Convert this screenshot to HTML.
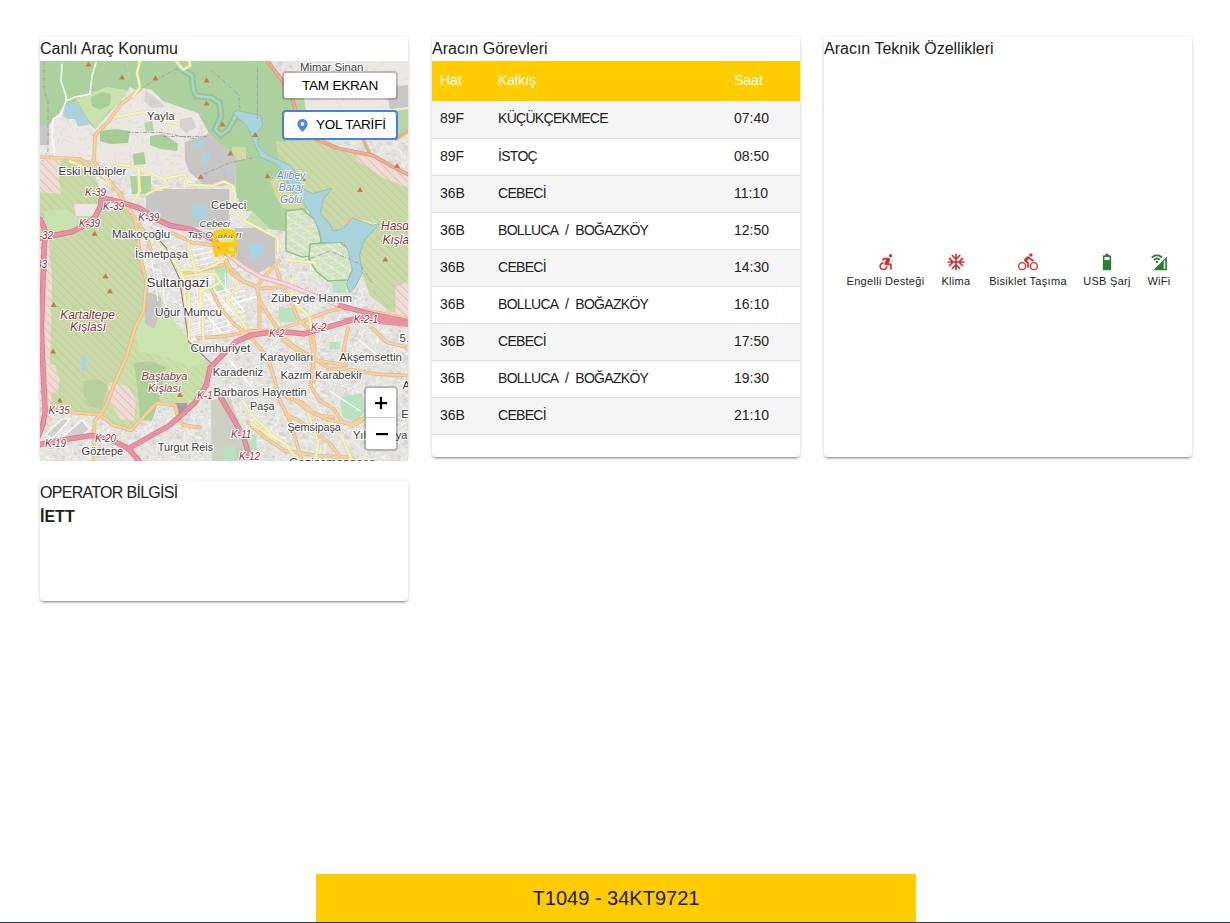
<!DOCTYPE html>
<html><head><meta charset="utf-8">
<style>
*{box-sizing:border-box;margin:0;padding:0}
html,body{width:1230px;height:923px;overflow:hidden;background:#fff;font-family:"Liberation Sans",sans-serif;color:#212121}
.card{position:absolute;background:#fff;border-radius:4px;box-shadow:0 3px 1px -2px rgba(0,0,0,.2),0 2px 2px 0 rgba(0,0,0,.14),0 1px 5px 0 rgba(0,0,0,.12);overflow:hidden}
.ttl{position:absolute;left:0;top:0;font-size:16px;line-height:24px;color:#212121;white-space:nowrap}
#c1{left:40px;top:37px;width:368px;height:420px;overflow:visible}
#c2{left:432px;top:37px;width:368px;height:420px}
#c3{left:824px;top:37px;width:368px;height:420px}
#c4{left:40px;top:481px;width:368px;height:120px}
#map{position:absolute;left:0;top:24px;width:368px;height:400px;overflow:hidden;background:#e3e0dc}
table{position:absolute;left:0;top:24px;width:368px;border-collapse:collapse;font-size:14px}
th{height:40px;background:#ffcc00;color:#fff;font-weight:normal;text-align:left;padding:0 0 2px 8px}
td{height:37px;padding:0 0 2px 8px;border-bottom:1px solid #e0e0e0;color:#212121}
td.k{letter-spacing:-0.7px;word-spacing:4px}
tr.g td{background:#f5f5f5}
.fi{position:absolute;top:215px;width:20px;height:20px}
.fl{position:absolute;top:238px;font-size:11px;line-height:13px;color:#212121;white-space:nowrap;text-align:center;width:120px;letter-spacing:0.3px}
#bar{position:absolute;left:316px;top:874px;width:600px;height:49px;background:#ffcc00;font-size:20px;text-align:center;line-height:48px;color:#1a1a1a}
#line{position:absolute;left:0;top:922px;width:1230px;height:1px;background:rgba(4,7,34,.83)}
.mb{position:absolute;background:#fff;background-clip:padding-box;border:2px solid rgba(0,0,0,.2);border-radius:4px;font-size:13.5px;letter-spacing:-0.2px;color:#000;white-space:nowrap}
</style></head><body>
<div class="card" id="c1"><div class="ttl">Canlı Araç Konumu</div><div id="map"><svg width="368" height="400" viewBox="0 0 368 400" style="position:absolute;left:0;top:0;font-family:'Liberation Sans',sans-serif">
<defs>
<pattern id="urb" width="42" height="42" patternUnits="userSpaceOnUse"><rect width="42" height="42" fill="#e4e2df"/><path fill="#d7d4d1" d="M38.1 3.7h3.9v2.9h-2.3zM19.0 26.3h3.8v2.3h-3.1zM36.9 33.5h3.9v2.4h-3.3zM8.6 30.3h3.6v2.8h-3.4zM9.0 37.8h4.0v3.5h-3.1zM33.2 13.5h3.8v3.2h-2.7zM3.5 18.5h3.1v3.0h-3.0zM1.2 34.0h2.1v3.1h-2.3zM14.1 33.1h2.3v1.8h-3.0zM30.4 35.3h3.4v3.4h-3.0zM39.9 3.6h2.4v2.6h-2.6zM30.6 26.8h3.0v3.2h-3.1zM13.1 16.0h3.7v3.3h-2.4zM35.7 40.7h3.0v2.6h-2.4zM22.5 21.1h3.2v1.6h-3.9zM21.7 16.8h3.6v2.6h-3.0zM29.0 2.8h3.1v2.3h-3.9zM38.8 11.3h2.9v1.8h-2.9zM34.3 37.8h3.0v2.1h-2.4zM26.0 38.9h2.3v3.1h-2.0zM8.2 9.5h3.4v2.1h-2.7zM26.0 4.4h3.5v1.7h-3.0zM10.5 8.3h3.1v2.4h-2.8zM17.4 22.2h2.3v1.9h-3.3zM26.8 22.2h3.7v2.7h-3.7zM9.8 31.1h3.6v3.3h-2.6zM13.2 38.8h2.4v3.5h-3.8zM5.6 10.1h3.5v2.0h-2.2zM35.0 17.7h3.6v1.8h-2.8zM28.8 0.7h2.4v2.9h-3.8zM40.7 4.8h3.0v3.0h-3.0zM28.8 7.9h2.1v1.7h-2.1zM23.2 21.6h3.1v1.8h-2.4zM8.6 35.3h4.0v3.4h-2.2zM2.6 40.0h2.9v3.0h-2.7zM19.6 21.6h2.9v2.7h-2.0zM29.4 35.5h2.4v2.4h-3.5zM17.0 8.2h2.3v2.5h-2.0zM37.5 33.7h3.4v3.2h-3.3zM17.0 25.2h3.0v3.5h-3.6z"/><path fill="none" stroke="#f5f4f2" stroke-width="0.9" d="M19.0 23.5l-6.1 1.5M21.3 24.7l5.5 3.6M26.5 33.3l5.3 1.6M3.8 34.0l-2.4 3.5M41.3 40.5l-3.3 6.3M6.6 0.6l-0.4 4.3M8.0 10.2l6.3 0.6M18.5 35.4l-0.4 7.2M21.0 27.8l0.7 5.3M41.9 41.8l-6.6 3.6M13.2 9.6l2.7 3.4M32.2 16.8l-5.3 2.7M40.2 35.6l5.0 0.0M38.2 19.7l-6.0 0.4M3.1 26.4l-4.1 3.4M3.7 14.0l-7.7 0.9M5.0 10.3l4.1 1.3M33.5 7.5l-1.2 6.1M8.0 30.7l6.6 2.9M4.9 17.7l4.2 3.3M40.8 33.7l4.9 6.9M8.8 16.6l-6.5 3.2M4.2 41.6l4.1 3.3M32.5 13.8l2.6 3.5M3.8 24.5l5.1 4.8M15.6 19.0l-6.4 0.8M24.1 36.4l4.0 2.6M38.2 34.3l3.5 3.5M31.1 39.5l7.1 5.1M37.1 25.3l1.1 4.4M1.6 40.4l5.5 5.1M10.8 34.6l-1.6 5.2M7.4 30.3l5.0 1.1M23.5 35.8l-1.9 5.1M38.5 8.6l5.3 0.3M18.7 2.5l5.0 3.1M24.0 5.5l3.5 7.7M41.2 27.6l-3.9 5.7M5.9 1.5l8.5 0.5M29.4 40.4l7.2 0.5M20.3 30.7l4.8 7.6M3.2 22.9l-5.8 6.3M31.0 29.6l-6.8 5.2M14.8 28.8l-8.0 2.6M17.5 33.2l-6.2 2.9M26.2 16.1l-1.8 6.8M3.4 26.9l-8.4 0.2M30.6 16.3l-4.6 5.1M18.5 35.2l7.5 2.0M1.3 25.3l0.3 5.1M29.3 20.9l-3.0 8.1M10.7 0.5l4.3 6.0M8.5 7.1l-7.0 2.1M18.6 37.5l3.8 6.3M8.3 18.1l-7.0 4.9M37.0 16.1l-1.4 5.4M5.7 20.9l-7.2 4.0M29.9 39.9l3.1 3.7M18.9 11.6l4.7 3.8M26.3 20.7l4.5 6.9M41.2 19.0l4.0 1.0M36.7 1.7l-4.2 5.4M13.0 33.2l4.7 0.3M19.1 1.0l-4.5 2.6M5.9 2.0l-2.5 5.7M26.5 27.5l-7.2 5.0M28.7 8.4l0.4 4.9M0.5 19.8l-3.1 3.8M11.4 14.5l-3.8 5.4M25.8 31.8l2.6 7.5"/></pattern>
<pattern id="res" width="42" height="42" patternUnits="userSpaceOnUse"><rect width="42" height="42" fill="#ebe8e4"/><path fill="none" stroke="#d9d4cf" stroke-width="0.6" d="M19.0 23.5l-6.1 1.5M21.3 24.7l5.5 3.6M26.5 33.3l5.3 1.6M3.8 34.0l-2.4 3.5M41.3 40.5l-3.3 6.3M6.6 0.6l-0.4 4.3M8.0 10.2l6.3 0.6M18.5 35.4l-0.4 7.2M21.0 27.8l0.7 5.3M41.9 41.8l-6.6 3.6M13.2 9.6l2.7 3.4M32.2 16.8l-5.3 2.7M40.2 35.6l5.0 0.0M38.2 19.7l-6.0 0.4M3.1 26.4l-4.1 3.4M3.7 14.0l-7.7 0.9M5.0 10.3l4.1 1.3M33.5 7.5l-1.2 6.1M8.0 30.7l6.6 2.9M4.9 17.7l4.2 3.3M40.8 33.7l4.9 6.9M8.8 16.6l-6.5 3.2M4.2 41.6l4.1 3.3M32.5 13.8l2.6 3.5M3.8 24.5l5.1 4.8M15.6 19.0l-6.4 0.8M24.1 36.4l4.0 2.6M38.2 34.3l3.5 3.5M31.1 39.5l7.1 5.1M37.1 25.3l1.1 4.4M1.6 40.4l5.5 5.1M10.8 34.6l-1.6 5.2M7.4 30.3l5.0 1.1M23.5 35.8l-1.9 5.1M38.5 8.6l5.3 0.3"/></pattern>
<pattern id="hat" width="6" height="6" patternUnits="userSpaceOnUse" patternTransform="rotate(-45)"><rect width="6" height="6" fill="#c9d9a8"/><rect width="0.7" height="6" fill="#bacb9c"/></pattern>
<pattern id="hatg" width="6" height="6" patternUnits="userSpaceOnUse" patternTransform="rotate(-45)"><rect width="6" height="6" fill="#cbdfab"/><rect width="0.7" height="6" fill="#bdcf9f"/></pattern>
<pattern id="hatp" width="6" height="6" patternUnits="userSpaceOnUse" patternTransform="rotate(-45)"><rect width="6" height="6" fill="#efdcd5"/><rect width="0.8" height="6" fill="#dbbab2"/></pattern>
<pattern id="frw" width="8" height="8" patternUnits="userSpaceOnUse" patternTransform="rotate(35)"><rect width="8" height="8" fill="#d0e1c1"/><path d="M0 2Q4 0 8 3M1 8Q3 5 7 0" stroke="#f1f4ea" stroke-width="0.8" fill="none"/></pattern>
</defs>
<rect width="368" height="400" fill="url(#urb)"/>
<!-- light residential -->
<path fill="url(#res)" d="M0 56L58 64 55 100 0 98Z"/>
<path fill="url(#res)" d="M55 64L70 51 81 41 95 29 103 27 112 29 123 40 158 52 160 70 150 80 148 100 158 116 123 116 95 110 55 100Z"/>
<path fill="url(#res)" d="M246 0H368V80H290L262 52 262 12Z"/>
<path fill="url(#res)" d="M189 128L204 128 206 165 195 167 189 162Z"/>
<!-- forests -->
<path fill="#add19e" d="M0 0H87L90 26 81 38 70 51 58 64 55 68 48 61 36 41 26 44 13 58 9 64H0Z"/>
<path fill="#add19e" d="M87 0H228L242 19 252 36 256 51 270 75 256 78 237 80 246 93 256 110 264 134 268 159 246 170 230 168 212 150 204 150 196 134 195 95 178 81 169 72 158 52 140 46 123 40 112 29 103 27 95 29 90 26Z"/>
<path fill="#a6cc95" d="M60 70L75 68 90 70 88 82 70 83 60 80Z"/>
<path fill="#a9cf98" d="M110 75L124 73 138 83 137 90 120 88 110 84Z"/>
<path fill="#a9cf98" d="M93 93L104 91 106 103 94 104Z"/>
<path fill="#b5d5a4" d="M104 62L112 60 114 70 106 71Z"/>
<path fill="#add19e" d="M90 115L111 115 111 133 92 133Z"/>
<path fill="#add19e" d="M196 95L224 105 250 112 264 146 246 170 230 168 212 150 204 150 200 134Z"/>
<path fill="#c5dfae" d="M212 150L230 168 222 168 206 160Z"/>
<path fill="#b3d4a3" d="M254 38L264 36 266 50 258 54Z"/>
<path fill="#b8d6a8" d="M355 50L368 48 368 70 356 78 350 60Z"/>
<path fill="#add19e" d="M237 78L275 78 290 88 275 93 246 96Z"/>
<path fill="#c9c6c6" d="M345 26L368 24 368 46 350 48Z"/>
<path fill="#c8e3ae" d="M36 38L67 26 87 29 81 41 68 51 55 67 46 55Z"/>
<path fill="#d3dca0" d="M192 86L206 86 206 99 193 99Z"/>
<path fill="#a9cf98" d="M51 36L62 31 71 33 70 44 60 49 52 45Z"/>
<path fill="#d6d2cf" d="M106 30L122 42 124 46 112 47 104 40Z M140 58L152 56 156 66 146 72 140 66Z"/>
<path fill="#d2daa0" d="M230 120L240 116 249 126 254 145 243 147 236 136Z"/>
<!-- lake -->
<path fill="#aad3df" d="M24.7 43.6L34.9 40.7 43.6 50.8 49.4 63.9 37.8 65.3 34.9 58 27.6 58 23.2 55.2Z"/>
<path fill="#c9c6c6" d="M0 64H9V84H0Z"/>
<!-- quarries -->
<path fill="#c8c5c5" d="M144.8 81.3L169.5 72.6 178.2 81.3 195.6 94.4 195.6 123.4 178.2 124.9 163.7 123.4 149 110.4 144.8 98.8Z"/>
<ellipse cx="159" cy="83" rx="6" ry="4.5" fill="#aad3df"/>
<ellipse cx="166" cy="96" rx="4" ry="6" fill="#aad3df"/>
<ellipse cx="189" cy="110" rx="3.5" ry="3" fill="#aad3df"/>
<path fill="#c8c5c5" d="M123 128L189.3 128 189.3 162.8 173.4 168.6 151.8 165.7 123 161.4Z"/>
<path fill="#aad3df" d="M152 145L166 143 170 152 162 160 152 158Z"/>
<path fill="#c8c5c5" d="M195 167L223.8 167 235.3 177.2 235.3 203 218 211.8 197.9 201.7 195 188.7Z"/>
<path fill="#aad3df" d="M208 184L222 181 224 194 212 199Z"/>
<path fill="#c8c5c5" d="M106 130L130 130 130 162 116 158 106 150Z"/>
<!-- military right -->
<path fill="url(#hat)" d="M236 81L270 79 296.8 87 333 94.4 350.6 104.6 368 113.3V256L350 250 330 235 322 212 319 195 324 180 340 163 312 157 303 167 293 170 289 163 281 153 281 134 264 134 256 110 238 98Z"/>
<path fill="url(#hatp)" d="M315 95L333 94.4 350.6 104.6 368 113.3V126L345 118 318 100Z"/>
<path fill="url(#hatp)" d="M355.5 226L368 220V267H355.5Z"/>
<path fill="#e5c98f" d="M303.6 157L318 157 323 170 321 177 316 176 313 181 306 172Z"/>
<path fill="#d2d6a0" d="M246 134L265 134 266 146 256 149 246 148Z"/>
<path fill="url(#frw)" stroke="#8fc47f" stroke-width="1.5" d="M246 150L262 148 276 160 281 178 279 194 262 196 246 190Z"/>
<path fill="url(#frw)" stroke="#8fc47f" stroke-width="1.5" d="M270 183L300 181 310 190 313 208 308 219 288 220 276 210 269 198Z"/>
<!-- water -->
<path fill="none" stroke="#98c888" stroke-width="7" d="M137.5 5.8L152 14.5 153.5 29 156.4 34.9 171 36.3 179.6 42 181 55.2 175.3 68.3 181 74 188.4 68.3 195.6 55.2 204.3 58"/>
<path fill="none" stroke="#93c4a2" stroke-width="3.2" d="M137.5 5.8L152 14.5 153.5 29 156.4 34.9 171 36.3 179.6 42 181 55.2 175.3 68.3 181 74 188.4 68.3 195.6 55.2 204.3 58"/>
<path fill="none" stroke="#aad3df" stroke-width="2.2" d="M137.5 5.8L152 14.5 153.5 29 156.4 34.9 171 36.3 179.6 42 181 55.2 175.3 68.3 181 74 188.4 68.3 195.6 55.2 204.3 58"/>
<path fill="#aad3df" stroke="#93c4a2" stroke-width="1" d="M197 49.4L220.4 54.6 223 65 216.5 71.5 219.1 85.8 226.9 93.6 238.6 98.8 251.6 105.3 256.8 114.4 262 127.4 272.4 132.6 291.9 127.4 282.8 139.1 280.6 152.7 289.2 162.8 293.5 170 303.6 167.1 312.3 157 332.4 164.2 339.6 162.8 323.8 180 319.5 194.5 322.3 211.8 315.1 226.2 309.4 232 306.5 223.3 312.3 208.9 307.9 188.7 303.6 181.5 282 181.5 279.1 168.6 271.9 154.2 268.5 150 259.4 135.2 249 124.8 245.1 111.8 236 102.7 220.4 96.2 213.9 81.9 207.4 65 197 55.9 192.7 52Z"/>
<!-- military left top -->
<path fill="url(#hatp)" d="M0 99L21 99 19 120 21 133 0 131Z"/>
<path fill="url(#hat)" d="M21 99L50 99 60 130 61 137 55 156 44 164.5 31.7 170.9 15.9 174 0 177V131L21 133 19 120Z"/>
<path fill="#c8e2b0" d="M5 150L25 148 40 158 42 166 31 171 15 174 5 170Z"/>
<path fill="#ebe8e4" d="M34 143L59 143 57 155 36 155Z"/>
<!-- Kartaltepe -->
<path fill="url(#hat)" d="M0 177L15.9 174 31.7 170.9 44.4 164.5 55 156.1 60.3 145.5 70 150 84.6 143.4 95.1 157.1 100.8 198.8 106.6 220.4 103.7 249.2 95 267 86.4 295.8 74.9 321.7 66.3 344.8 59.8 353.6 26 351 0 348.4Z"/>
<path fill="url(#hatp)" d="M0 180L9 178 12 220 10 300 12 360 8 372 0 372Z"/>
<path fill="#b9cf9c" d="M43 320L58 318 67.6 324 62 348 50 345 44 335Z"/>
<path fill="#aad3df" d="M41 295L46 294 47 309 42 310Z"/>
<path fill="url(#hatp)" d="M2.6 303L15 304 19.5 318 18 331.5 2.6 331.5Z"/>
<!-- Bastabya -->
<path fill="#cbe5ae" d="M95 267L103.7 249 106.6 235 116.3 227.7 132.5 256.9 148.8 279.7 169.3 305.7 166 320 150 306 128 296 100 290Z"/>
<path fill="#c8c5c5" d="M105 230L121 236 121 250 114 268 105 262Z"/>
<path fill="url(#hatg)" d="M95 267L100 290 128 296 150 306 170 300 170.5 307.3 166.2 324.6 154.7 341.9 137.4 356 135.3 344.5 117 342 110.6 348.4 91 369.2 72.8 364 59.8 353.6 66.3 344.8 74.9 321.7 86.4 295.8Z"/>
<path fill="#b0cf9d" d="M94 302L110 300 126 306 122 330 112 360 100 358 98 330Z"/>
<path fill="url(#hatp)" d="M67.6 321L88 325 96 340 94 360 80 358 70 340Z"/>
<!-- misc -->
<path fill="#cdd1c5" d="M170.5 339L190 336 203.7 376 209 400H172Z"/>
<path fill="#9f9f9f" d="M135.3 342L147 342 147 353.6 135.3 353.6Z"/>
<path fill="#b9e3c0" d="M183.5 385H195V400H183.5Z M206.5 373.6H216.6V389.4H206.5Z M175 206.5H187V231H175Z M239 247H256V261H239Z M293 220H306V232H293Z M300 336L322 332 326 350 316 361 302 356Z M290 281L300 281 300 288 290 288Z"/>
<path fill="none" stroke="#a39fb0" stroke-width="1" stroke-dasharray="4 1.5 1 1.5" d="M171 8.7L198.5 33.4 200 48M217.4 7.3L217.4 58M123 75.5L166.6 75.5 169.5 71M163.7 113L189.8 101.7 217.4 95.8M4 0L4 30 8 40 8 90 2 100M99.7 28L138.7 6.5M86.7 71.5L121 71.5 156 78M263 200L290 190 320 203 332 222"/>
<path fill="none" stroke="#fbfaf8" stroke-width="1.1" d="M150 238.0L205 224.0M150 243.2L205 229.2M150 248.4L205 234.4M150 253.6L205 239.6M150 258.8L205 244.8M150 264.0L205 250.0M150 269.2L205 255.2M150 274.4L205 260.4M150 279.6L205 265.6M156 212L160 272M170 212L174 272M185 212L189 272"/>
<path fill="none" stroke="#8d817b" stroke-width="1.1" d="M120.2 179.9L126.5 187.3 130.7 198.9 139.2 216.9 143.4 244 148.7 280.7 175.8 306.7"/>
<path fill="none" stroke="#fbfaf8" stroke-width="1.1" d="M151.9 189.4L170.9 185.1M152.9 194.7L172 190.4M154 200L173 195.7M155.1 205.3L174 201M112 200L118 240M120 205L126 250"/>
<path fill="#d3d0cd" stroke="#fff" stroke-width="1.2" d="M5 374L22 358 30 358 13 377Z M22 377L42 359 50 368 38 378Z"/>
<!-- white roads -->
<g fill="none" stroke="#fff" stroke-width="1.4" stroke-linecap="round" stroke-linejoin="round">
<path d="M22 3L21 20 26 35 26 40 35 36 50 33 52 15 56 2"/>
<path d="M26 40L20 55 13 58 12 75 15 95"/>
<path d="M165 232L190 262M172 226L197 256M180 221L204 250M156 240L180 270M190 300L215 330M250 300L270 320M290 330L320 350M200 240L220 235M280 350L300 370M320 280L345 300"/>
</g>
<!-- orange roads -->
<g fill="none" stroke-linecap="round" stroke-linejoin="round">
<g stroke="#e2b47f" stroke-width="3.6">
<path d="M101 28L81 43 68 61 55 74 54 101 61 110 81 134"/>
<path d="M0 96L40 98 56 110 70 122 81 134 86 145 95.1 157.1 100.8 198.8 106.6 220.4 103.7 249.2 95 267 86.4 295.8 74.9 321.7 66.3 344.8 59.8 353.6 54.6 360 53.3 400"/>
<path d="M53 99L65.5 115.9 78.2 130.7 84.6 143.4 95.1 157.1 105.7 173 111 189"/>
<path d="M0 348.4L26 351 59.8 353.6 72.8 364 91 369.2 110.6 348.4 117 342 135.3 344.5 137.9 355 143 364 160 366.6"/>
<path d="M131.6 171.4L151.8 181.5 173.4 184.4 185 194.5 189.3 206 203.7 220.4 221 227.6 246 226"/>
<path d="M185.6 200L188.2 210.4 201.2 219.5 216.8 226 219.4 239 219.4 267.6M216.8 226L224.6 215.6 235 203.9 239 200"/>
<path d="M235 203.9L242.9 226 252 243 258.5 258.5 268.9 267.6 272.8 291 274 320"/>
<path d="M219.4 239L227.3 252 237.7 267.6 240.3 275.4 248 283.2 255.9 288.5 261 293.7 274 298.9 304 304"/>
<path d="M158 277L183 275.4 209 270.2 237.7 269 261 261.1 287 250.7 304 246.8 340 252 368 258"/>
<path d="M170 226L180.4 246.8 193.4 262.4 206.4 272.8 216.8 283.2 228.6 298.9 235 320 240 340 250 360 262 400"/>
<path d="M144 213L183 203.9M246 278.5L254.6 285.7 270.5 295.8 289.2 307.3 310.8 308.8 335.3 313.1 368 314.5"/>
<path d="M271.9 267L274.8 288.6 271.9 310.2 270.5 324.6 279.1 339 293.5 347.7 302.2 360.6 312.3 364.9 320.9 360.6 326.7 353.4 338.2 364.9 346.8 376.5 368 376.5"/>
<path d="M308 267L303.6 288.6 306.5 304.4M246 336L263.3 341.9 274.8 353.4 293.5 356.3M246 353.4L260.4 360.6 274.8 370.7 289.2 382.2 303.6 400M332.4 267L346.8 281.4 365.5 285.7"/>
<path d="M207.4 361L224.3 376.2 244.6 389.8 278.4 394.8 312.3 396.5M254.8 339L268.3 349.2 288.6 359.3 312.3 362.7 325.8 356MM-1 390L29 381 52.5 377.8MM171 216.9L175.1 229.5 180.4 244M209.4 278.5L215.2 295.8 223.8 310.2 238.2 316 246 321.7M131.6 353.4L137.4 367.8 157.6 377.9 170.5 400M209.4 353.4L223.8 359.2 246 367.8M203.7 376.5L223.8 390.9 246 396.6"/>
<path d="M356 78L368 70M323 78L330 93"/>
</g>
<g stroke="#f6d09f" stroke-width="2.4">
<path d="M101 28L81 43 68 61 55 74 54 101 61 110 81 134"/><path d="M0 96L40 98 56 110 70 122 81 134 86 145 95.1 157.1 100.8 198.8 106.6 220.4 103.7 249.2 95 267 86.4 295.8 74.9 321.7 66.3 344.8 59.8 353.6 54.6 360 53.3 400"/><path d="M53 99L65.5 115.9 78.2 130.7 84.6 143.4 95.1 157.1 105.7 173 111 189"/><path d="M0 348.4L26 351 59.8 353.6 72.8 364 91 369.2 110.6 348.4 117 342 135.3 344.5 137.9 355 143 364 160 366.6"/><path d="M131.6 171.4L151.8 181.5 173.4 184.4 185 194.5 189.3 206 203.7 220.4 221 227.6 246 226"/><path d="M185.6 200L188.2 210.4 201.2 219.5 216.8 226 219.4 239 219.4 267.6M216.8 226L224.6 215.6 235 203.9 239 200"/><path d="M235 203.9L242.9 226 252 243 258.5 258.5 268.9 267.6 272.8 291 274 320"/><path d="M219.4 239L227.3 252 237.7 267.6 240.3 275.4 248 283.2 255.9 288.5 261 293.7 274 298.9 304 304"/><path d="M158 277L183 275.4 209 270.2 237.7 269 261 261.1 287 250.7 304 246.8 340 252 368 258"/><path d="M170 226L180.4 246.8 193.4 262.4 206.4 272.8 216.8 283.2 228.6 298.9 235 320 240 340 250 360 262 400"/><path d="M144 213L183 203.9M246 278.5L254.6 285.7 270.5 295.8 289.2 307.3 310.8 308.8 335.3 313.1 368 314.5"/><path d="M271.9 267L274.8 288.6 271.9 310.2 270.5 324.6 279.1 339 293.5 347.7 302.2 360.6 312.3 364.9 320.9 360.6 326.7 353.4 338.2 364.9 346.8 376.5 368 376.5"/><path d="M308 267L303.6 288.6 306.5 304.4M246 336L263.3 341.9 274.8 353.4 293.5 356.3M246 353.4L260.4 360.6 274.8 370.7 289.2 382.2 303.6 400M332.4 267L346.8 281.4 365.5 285.7"/><path d="M207.4 361L224.3 376.2 244.6 389.8 278.4 394.8 312.3 396.5M254.8 339L268.3 349.2 288.6 359.3 312.3 362.7 325.8 356MM-1 390L29 381 52.5 377.8MM171 216.9L175.1 229.5 180.4 244M209.4 278.5L215.2 295.8 223.8 310.2 238.2 316 246 321.7M131.6 353.4L137.4 367.8 157.6 377.9 170.5 400M209.4 353.4L223.8 359.2 246 367.8M203.7 376.5L223.8 390.9 246 396.6"/>
</g>
</g>
<!-- yellow roads -->
<g fill="none" stroke-linecap="round" stroke-linejoin="round">
<g stroke="#dcdc9a" stroke-width="3">
<path d="M100 0L97 12 100 26 93 36M75 56L103 51 112 54 125 59.6 138 63M99 107L99 134M136 0L143.3 8.7 150.6 4.4 149 0"/>
<path d="M30 100L65 116 70 125M77 103L100 107 123 118 144.8 113.3 147.7 123.4 172.4 124.9 184 120.5 192.7 124.9 195.6 134 192 148.4 205 160 238 177.2 238 191.6M98 108L100 130 93 141M106 134L116 128 130 125"/>
<path d="M117 182L129.7 193.6 139.2 208.4 143.4 216.9 145.5 244M147.7 182L154 204.2 156.1 212.6M141.3 215.8L159.3 213.7 175.1 212.6 180.4 221 173 225.3 160.3 229.5 160.3 244M139.2 208.4L160 209.5 175 204 186 196M198.6 223.4L186.9 239 206.4 267.6M161 226L163.5 280.7M149.2 231.2L149.2 278M253 217L250.7 239 268.9 254.6 271.5 267.6M246 198.8L274.8 201.7M250.3 217.5L254.6 240"/>
<path d="M202.3 339L210.8 352.5 231 372.8 249.7 386.4M210.8 362.7L244.6 383 254.8 394.8M268 352.5L278.4 381.3 275 400M300.4 372.8L312.3 400MM31.6 381.5L32 400M0 400L30 392MM101.5 364L106 400M110.6 348.4L135 364 160 362M320.9 281.4L326.7 292.9 332.4 307.3M246 290L254.6 304.4 274.8 305.9M140 360L160 380 170 400M230 340L250 380M290 370L310 400M330 300L360 330"/>
</g>
<g stroke="#f5f5b8" stroke-width="2">
<path d="M100 0L97 12 100 26 93 36M75 56L103 51 112 54 125 59.6 138 63M99 107L99 134M136 0L143.3 8.7 150.6 4.4 149 0"/><path d="M30 100L65 116 70 125M77 103L100 107 123 118 144.8 113.3 147.7 123.4 172.4 124.9 184 120.5 192.7 124.9 195.6 134 192 148.4 205 160 238 177.2 238 191.6M98 108L100 130 93 141M106 134L116 128 130 125"/><path d="M117 182L129.7 193.6 139.2 208.4 143.4 216.9 145.5 244M147.7 182L154 204.2 156.1 212.6M141.3 215.8L159.3 213.7 175.1 212.6 180.4 221 173 225.3 160.3 229.5 160.3 244M139.2 208.4L160 209.5 175 204 186 196M198.6 223.4L186.9 239 206.4 267.6M161 226L163.5 280.7M149.2 231.2L149.2 278M253 217L250.7 239 268.9 254.6 271.5 267.6M246 198.8L274.8 201.7M250.3 217.5L254.6 240"/><path d="M202.3 339L210.8 352.5 231 372.8 249.7 386.4M210.8 362.7L244.6 383 254.8 394.8M268 352.5L278.4 381.3 275 400M300.4 372.8L312.3 400MM31.6 381.5L32 400M0 400L30 392MM101.5 364L106 400M110.6 348.4L135 364 160 362M320.9 281.4L326.7 292.9 332.4 307.3M246 290L254.6 304.4 274.8 305.9M140 360L160 380 170 400M230 340L250 380M290 370L310 400M330 300L360 330"/>
</g>
</g>
<!-- trunk -->
<path fill="none" stroke="#dd8f7c" stroke-width="3.8" stroke-linecap="round" stroke-linejoin="round" d="M227.6 0L242 19 252 36 256 51 270 75 296.8 87 333 94.4 350.6 104.6 368 113.3"/>
<path fill="none" stroke="#f4ab93" stroke-width="2.4" stroke-linecap="round" stroke-linejoin="round" d="M227.6 0L242 19 252 36 256 51 270 75 296.8 87 333 94.4 350.6 104.6 368 113.3"/>
<!-- motorways -->
<g fill="none" stroke-linecap="round" stroke-linejoin="round">
<g stroke="#d9788b" stroke-width="5.4">
<path d="M0 177.2L15.9 174 31.7 170.9 44.4 164.5 55 156.1 60.3 145.5 61.3 137 68.7 138.1 84.6 142.3 100.4 147.6 116.3 158.2 130 164.5 151.8 168.6 173.4 178.6 187.8 193"/>
<path d="M296.4 243.5L332.4 253.5 368 260.7"/>
<path d="M0 158.2L3.2 164.5 6.3 173 4.2 183.6 2.9 220.4 1.4 267 2.6 299 3.9 325 5.2 351 2.6 364 -2 376"/>
<path d="M0 383.6L26 378.4 52 374.4 72.8 379.7 88.5 387.5 98.9 400M88.5 387.5L130 364 154.7 341.9 166.2 324.6 170 306.7 180.4 296.3 196 280.7 211.6 274.1 237.7 270.2 263.7 272.8 287 266.3 314 258.5 368 262"/>
<path d="M180.6 336.1L195 360.6 203.7 376.5 211 400"/>
</g>
<g stroke="#e892a2" stroke-width="3.8">
<path d="M0 177.2L15.9 174 31.7 170.9 44.4 164.5 55 156.1 60.3 145.5 61.3 137 68.7 138.1 84.6 142.3 100.4 147.6 116.3 158.2 130 164.5 151.8 168.6 173.4 178.6 187.8 193"/><path d="M296.4 243.5L332.4 253.5 368 260.7"/><path d="M0 158.2L3.2 164.5 6.3 173 4.2 183.6 2.9 220.4 1.4 267 2.6 299 3.9 325 5.2 351 2.6 364 -2 376"/><path d="M0 383.6L26 378.4 52 374.4 72.8 379.7 88.5 387.5 98.9 400M88.5 387.5L130 364 154.7 341.9 166.2 324.6 170 306.7 180.4 296.3 196 280.7 211.6 274.1 237.7 270.2 263.7 272.8 287 266.3 314 258.5 368 262"/><path d="M180.6 336.1L195 360.6 203.7 376.5 211 400"/>
</g>
</g>
<path fill="#e892a2" d="M300 258L332 252 368 258 368 266 330 262Z"/>
<path fill="none" stroke="#e8b4bd" stroke-width="5" stroke-linecap="round" d="M187.8 193L203.7 206 221 216 246 223.3 296.4 243.5"/>
<path fill="none" stroke="#f6dde0" stroke-width="2.6" stroke-linecap="round" d="M187.8 193L203.7 206 221 216 246 223.3 296.4 243.5"/>
<!-- peaks -->
<path fill="#c77c45" d="M48.6 0.5l3 5h-6z M82 13.5l3 5h-6z M115.5 14.2l3 5h-6z M166.6 16.4l3 5h-6z M166.6 39.5l3 5h-6z M182.5 60.5l3 5h-6z M190.5 89.5l3 5h-6z M160.8 113l3 5h-6z M227.6 112.2l3 5h-6z M357 102l3 5h-6z M320 126l3 5h-6z M54.7 169.7l3 5h-6z M65.5 212.2l3 5h-6z M69.9 227.3l3 5h-6z M13.7 241l3 5h-6z M13 287.5l3 5h-6z M19.9 336.5l3 5h-6z M345.4 195.6l3 5h-6z M140 331l3 5h-6z M263 115l3 5h-6z M215 71l3 5h-6z"/>
<!-- labels -->
<g fill="#3a3a3a" stroke="#fff" stroke-width="2.2" stroke-linejoin="round" paint-order="stroke" font-size="11.3">
<text x="18.5" y="114.3" font-size="11.5">Eski Habipler</text>
<text x="107" y="58.5">Yayla</text>
<text x="260" y="10">Mimar Sinan</text>
<text x="171" y="147.5">Cebeci</text>
<text x="72" y="177.2" font-size="11.5">Malkoçoğlu</text>
<text x="95" y="197.3" font-size="11.5">İsmetpaşa</text>
<text x="106.6" y="226" font-size="13.3">Sultangazi</text>
<text x="115" y="255" font-size="11.7">Uğur Mumcu</text>
<text x="231" y="240.5" font-size="11.4">Zübeyde Hanım</text>
<text x="150.4" y="290.8" font-size="11.7">Cumhuriyet</text>
<text x="219.8" y="299.7" font-size="11.2">Karayolları</text>
<text x="299.3" y="300.1" font-size="11.5">Akşemsettin</text>
<text x="172.7" y="315.3" font-size="11.2">Karadeniz</text>
<text x="240.4" y="318" font-size="11.1">Kazım Karabekir</text>
<text x="173.4" y="335.4" font-size="11.2">Barbaros Hayrettin</text>
<text x="210" y="349.3" font-size="10.8">Paşa</text>
<text x="247.4" y="370" font-size="10.8">Şemsipaşa</text>
<text x="117.7" y="390" font-size="10.8">Turgut Reis</text>
<text x="41.6" y="394" font-size="11">Göztepe</text>
<text x="313" y="378" font-size="11">Yıldıztabya</text>
<text x="359.5" y="280.7" font-size="11.5">5.</text>
<text x="362.6" y="328" font-size="11.5">A</text>
<text x="361.2" y="356.5" font-size="11.5">E</text>
<text x="249" y="406" font-size="12">Gaziosmanpaşa</text>
</g>
<g fill="#8b2f3a" stroke="#fff" stroke-width="2" stroke-linejoin="round" paint-order="stroke" font-style="italic" font-size="10">
<text x="20.2" y="258" font-size="12">Kartaltepe</text>
<text x="30" y="270" font-size="12">Kışlası</text>
<text x="101.5" y="318.8" font-size="11">Baştabya</text>
<text x="108" y="331" font-size="11">Kışlası</text>
<text x="341" y="168.6" font-size="12">Hasdal</text>
<text x="342.5" y="183" font-size="12">Kışlası</text>
<text x="45" y="135">K-39</text>
<text x="62.9" y="148.7">K-39</text>
<text x="39" y="166">K-39</text>
<text x="98.3" y="159.8">K-39</text>
<text x="-8" y="177.8">K-32</text>
<text x="-4" y="207">33</text>
<text x="8.6" y="353.4">K-35</text>
<text x="5" y="385.5">K-19</text>
<text x="55" y="381">K-20</text>
<text x="157" y="338">K-1</text>
<text x="191" y="377">K-11</text>
<text x="199" y="399">K-12</text>
<text x="229" y="276">K-2</text>
<text x="271" y="270">K-2</text>
<text x="313.7" y="262">K-2-1</text>
</g>
<g fill="#3a3a3a" stroke="#fff" stroke-width="2" stroke-linejoin="round" paint-order="stroke" font-style="italic" font-size="9.8" text-anchor="middle">
<text x="174.8" y="165.7">Cebeci</text>
<text x="174.5" y="177.2">Taş Ocakları</text>
</g>
<g fill="#5a8ab5" stroke="#fff" stroke-width="1.6" stroke-linejoin="round" paint-order="stroke" font-style="italic" font-size="10.5" text-anchor="middle">
<text x="251" y="118">Alibey</text>
<text x="251" y="130">Baraj</text>
<text x="251" y="142">Gölü</text>
</g>

</svg>
<svg style="position:absolute;left:166.5px;top:164.5px" width="35.5" height="35.5" viewBox="0 0 24 24"><path fill="#ffcc00" d="M4 16c0 .88.39 1.67 1 2.22V20c0 .55.45 1 1 1h1c.55 0 1-.45 1-1v-1h8v1c0 .55.45 1 1 1h1c.55 0 1-.45 1-1v-1.78c.61-.55 1-1.34 1-2.22V6c0-3.5-3.58-4-8-4s-8 .5-8 4v10zm3.5 1c-.83 0-1.5-.67-1.5-1.5S6.67 14 7.5 14s1.5.67 1.5 1.5S8.33 17 7.5 17zm9 0c-.83 0-1.5-.67-1.5-1.5s.67-1.5 1.5-1.5 1.5.67 1.5 1.5-.67 1.5-1.5 1.5zm1.5-6H6V6h12v5z"/><rect x="6" y="6" width="12" height="5" fill="#ffcc00" opacity=".25"/></svg>
<div class="mb" style="left:242px;top:10px;width:116px;height:29px;line-height:25px;text-align:center">TAM EKRAN</div>
<div class="mb" style="left:242px;top:49px;width:116px;height:30px;border-color:#4a80db;line-height:26px"><svg style="position:absolute;left:13px;top:7px" width="11" height="13" viewBox="0 0 11 14"><path fill="#4a86e8" d="M5.5 0C2.5 0 0 2.4 0 5.4 0 9.3 5.5 14 5.5 14S11 9.3 11 5.4C11 2.4 8.5 0 5.5 0zm0 7.3a2 2 0 1 1 0-4 2 2 0 0 1 0 4z"/></svg><span style="position:absolute;left:32px;top:0">YOL TARİFİ</span></div>
<div class="mb" style="left:324px;top:325px;width:34px;height:65px"><div style="position:absolute;left:0;top:0;width:30px;height:30px;border-bottom:1px solid #ccc"><svg style="position:absolute;left:9px;top:9px" width="12" height="12"><rect x="0" y="5" width="12" height="2.2" fill="#000"/><rect x="4.9" y="0" width="2.2" height="12" fill="#000"/></svg></div><div style="position:absolute;left:0;top:31px;width:30px;height:30px"><svg style="position:absolute;left:10px;top:14px" width="12" height="3"><rect x="0" y="0" width="12" height="2.2" fill="#000"/></svg></div></div>
</div></div>
<div class="card" id="c2"><div class="ttl">Aracın Görevleri</div>
<table>
<tr><th style="width:58px">Hat</th><th style="width:236px">Kalkış</th><th>Saat</th></tr>
<tr class="g"><td>89F</td><td class="k">KÜÇÜKÇEKMECE</td><td>07:40</td></tr>
<tr><td>89F</td><td class="k">İSTOÇ</td><td>08:50</td></tr>
<tr class="g"><td>36B</td><td class="k">CEBECİ</td><td>11:10</td></tr>
<tr><td>36B</td><td class="k">BOLLUCA / BOĞAZKÖY</td><td>12:50</td></tr>
<tr class="g"><td>36B</td><td class="k">CEBECİ</td><td>14:30</td></tr>
<tr><td>36B</td><td class="k">BOLLUCA / BOĞAZKÖY</td><td>16:10</td></tr>
<tr class="g"><td>36B</td><td class="k">CEBECİ</td><td>17:50</td></tr>
<tr><td>36B</td><td class="k">BOLLUCA / BOĞAZKÖY</td><td>19:30</td></tr>
<tr class="g"><td>36B</td><td class="k">CEBECİ</td><td>21:10</td></tr>
</table></div>
<div class="card" id="c3"><div class="ttl">Aracın Teknik Özellikleri</div>
<svg class="fi" style="left:51.5px" viewBox="0 0 24 24"><circle cx="17.5" cy="4.5" r="2" fill="#d32f2f"/><path fill="#d32f2f" d="M14 17h-2c0 1.65-1.35 3-3 3s-3-1.35-3-3 1.35-3 3-3v-2c-2.76 0-5 2.24-5 5s2.24 5 5 5 5-2.24 5-5zm3-3.5h-1.86l1.67-3.67C17.42 8.5 16.44 7 14.96 7h-5.2c-.81 0-1.54.47-1.87 1.2L7.22 10l1.92.53L9.79 9H12l-1.83 4.1c-.6 1.33.39 2.9 1.85 2.9H17v5h2v-5.5c0-1.1-.9-2-2-2z"/></svg>
<svg class="fi" style="left:122px" viewBox="0 0 24 24"><path fill="#d32f2f" d="M22 11h-4.17l3.24-3.24-1.41-1.42L15 11h-2V9l4.66-4.66-1.42-1.41L13 6.17V2h-2v4.17L7.76 2.93 6.34 4.34 11 9v2H9L4.34 6.34 2.93 7.76 6.17 11H2v2h4.17l-3.24 3.24 1.41 1.42L9 13h2v2l-4.66 4.66 1.42 1.41L11 17.83V22h2v-4.17l3.24 3.24 1.42-1.41L13 15v-2h2l4.66 4.66 1.41-1.42L17.83 13H22z"/></svg>
<svg class="fi" style="left:194px" viewBox="0 0 24 24"><path fill="#d32f2f" d="M15.5 5.5c1.1 0 2-.9 2-2s-.9-2-2-2-2 .9-2 2 .9 2 2 2zM5 12c-2.8 0-5 2.2-5 5s2.2 5 5 5 5-2.2 5-5-2.2-5-5-5zm0 8.5c-1.9 0-3.5-1.6-3.5-3.5s1.6-3.5 3.5-3.5 3.5 1.6 3.5 3.5-1.6 3.5-3.5 3.5zm5.8-10l2.4-2.4.8.8c1.3 1.3 3 2.1 5.1 2.1V9c-1.5 0-2.7-.6-3.6-1.5l-1.9-1.9c-.5-.4-1-.6-1.6-.6s-1.1.2-1.4.6L7.8 8.4c-.4.4-.6.9-.6 1.4 0 .6.2 1.1.6 1.4L11 14v5h2v-6.2l-2.2-2.3zM19 12c-2.8 0-5 2.2-5 5s2.2 5 5 5 5-2.2 5-5-2.2-5-5-5zm0 8.5c-1.9 0-3.5-1.6-3.5-3.5s1.6-3.5 3.5-3.5 3.5 1.6 3.5 3.5-1.6 3.5-3.5 3.5z"/></svg>
<svg class="fi" style="left:273px" viewBox="0 0 24 24"><path fill="#2e7d32" d="M15.67 4H14V2h-4v2H8.33C7.6 4 7 4.6 7 5.33v15.33C7 21.4 7.6 22 8.33 22h7.33c.74 0 1.34-.6 1.34-1.33V5.33C17 4.6 16.4 4 15.67 4zM15 9.6H9V6h6v3.6z"/></svg>
<svg class="fi" style="left:325px" viewBox="0 0 24 24"><path fill="#2e7d32" fill-rule="evenodd" d="M21.5 5.5L5 22h16.5zM19.5 20h-1.8v-8.5l1.8-1.8z"/><path fill="none" stroke="#2e7d32" stroke-width="2.2" d="M3.3 6.6a9 9 0 0 1 12.4 0M6 9.4a5.2 5.2 0 0 1 7 0"/><circle cx="9.5" cy="12" r="1.4" fill="#2e7d32"/></svg>
<div class="fl" style="left:1.5px">Engelli Desteği</div>
<div class="fl" style="left:72px">Klima</div>
<div class="fl" style="left:144px">Bisiklet Taşıma</div>
<div class="fl" style="left:223px">USB Şarj</div>
<div class="fl" style="left:275px">WiFi</div>
</div>
<div class="card" id="c4"><div class="ttl" style="letter-spacing:-0.7px">OPERATOR BİLGİSİ</div><div style="position:absolute;left:0;top:24px;font-size:16px;font-weight:bold;line-height:24px">İETT</div></div>
<div id="bar">T1049 - 34KT9721</div>
<div id="line"></div>
</body></html>
